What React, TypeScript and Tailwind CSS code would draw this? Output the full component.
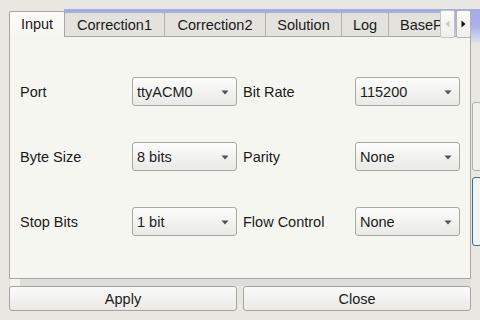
import React from "react";

function Combo({ value }: { value: string }) {
  return (
    <div className="h-[29px] flex items-center justify-between rounded-[3px] border border-[#a9a9a4] bg-gradient-to-b from-[#fcfcfb] to-[#e9e9e5] pl-[4px] pr-[7px] pt-px text-[#1c1c1c]">
      <span>{value}</span>
      <svg width="8" height="5" viewBox="0 0 8 5">
        <path d="M0.5 0.5 L7.5 0.5 L4 4.5 Z" fill="#505050" />
      </svg>
    </div>
  );
}

function Tab({ label, w, selected }: { label: string; w: string; selected?: boolean }) {
  if (selected) {
    return (
      <div
        className={`relative z-10 -mb-px h-[27px] shrink-0 flex items-center justify-center border-l border-t border-r border-[#a8a8a3] rounded-t-[2px] bg-gradient-to-b from-[#fbfbf9] to-[#f6f6f1] pb-[2px] ${w}`}
      >
        {label}
      </div>
    );
  }
  return (
    <div
      className={`-ml-px h-[25px] shrink-0 flex items-center justify-center border-l border-t border-r border-[#b2b2ad] rounded-t-[2px] bg-[#e3e2dd] pt-[1px] ${w}`}
    >
      {label}
    </div>
  );
}

export default function App() {
  return (
    <div className="relative w-[480px] h-[320px] overflow-hidden bg-[#e8e7e2] text-[14.5px] leading-none text-[#1a1a1a] font-['Liberation_Sans',Arial,sans-serif]">
      {/* background window remnants */}
      <div className="absolute left-[64px] top-[9px] w-[416px] h-[34px] bg-gradient-to-b from-[#a3abea] via-[#a9b0e6] to-[#e2e2ea]" />
      <div className="absolute left-[472px] top-[102px] w-[10px] h-[69px] rounded-[3px] border border-[#aeaeaa] bg-[#f1f1ec]" />
      <div className="absolute left-[472px] top-[177px] w-[10px] h-[69px] rounded-[3px] border border-[#2f6e9e] bg-[#f4f4ef]" />

      <div className="relative flex flex-col w-[462px] ml-[9px] pt-[10px]">
        {/* tab bar */}
        <div className="flex items-end h-[26px]">
          <div className="flex items-end w-[432px] h-[27px] overflow-hidden self-start">
            <Tab label="Input" w="w-[56px]" selected />
            <Tab label="Correction1" w="w-[101px]" />
            <Tab label="Correction2" w="w-[102px]" />
            <Tab label="Solution" w="w-[77px]" />
            <Tab label="Log" w="w-[48px]" />
            <div className="-ml-px h-[25px] shrink-0 w-[70px] flex items-center border-l border-t border-[#b2b2ad] bg-[#e3e2dd] pl-[11px] pt-[1px]">
              BaseP
            </div>
          </div>
          <div className="relative z-10 self-start flex h-[28px] gap-px">
            <div className="w-[15px] h-[28px] flex items-center justify-center rounded-[2px] border border-[#c4c4c0] bg-gradient-to-b from-[#fbfbfa] to-[#eeeeea]">
              <svg width="5" height="8" viewBox="0 0 5 8">
                <path d="M4.5 0.5 L4.5 7.5 L0.5 4 Z" fill="#c9c9c5" />
              </svg>
            </div>
            <div className="w-[15px] h-[28px] flex items-center justify-center rounded-[2px] border border-[#b4b4b0] bg-gradient-to-b from-[#fbfbfa] to-[#eeeeea]">
              <svg width="5" height="8" viewBox="0 0 5 8">
                <path d="M0.5 0.5 L0.5 7.5 L4.5 4 Z" fill="#111" />
              </svg>
            </div>
          </div>
        </div>

        {/* pane */}
        <div className="h-[243px] border border-[#a8a8a3] bg-[#f6f6f1] pt-[40px] pl-[10px]">
          <div className="grid grid-cols-[112px_105px_118px_105px] gap-y-[36px] items-center">
            <div className="pt-[2px]">Port</div>
            <Combo value="ttyACM0" />
            <div className="pl-[6px] pt-[2px]">Bit Rate</div>
            <Combo value="115200" />

            <div className="pt-[2px]">Byte Size</div>
            <Combo value="8 bits" />
            <div className="pl-[6px] pt-[2px]">Parity</div>
            <Combo value="None" />

            <div className="pt-[2px]">Stop Bits</div>
            <Combo value="1 bit" />
            <div className="pl-[6px] pt-[2px]">Flow Control</div>
            <Combo value="None" />
          </div>
        </div>

        {/* strip */}
        <div className="flex h-[7px] bg-[#dfdeda]">
          <div className="ml-px w-[10px] bg-[#f4f4ef]" />
        </div>

        {/* buttons */}
        <div className="flex gap-[6px]">
          <div className="w-[228px] h-[25px] flex items-center justify-center rounded-[3px] border border-[#a6a6a1] bg-gradient-to-b from-[#fbfbfa] to-[#e9e9e5] pt-[2px]">
            Apply
          </div>
          <div className="w-[228px] h-[25px] flex items-center justify-center rounded-[3px] border border-[#a6a6a1] bg-gradient-to-b from-[#fbfbfa] to-[#e9e9e5] pt-[2px]">
            Close
          </div>
        </div>
      </div>
    </div>
  );
}
